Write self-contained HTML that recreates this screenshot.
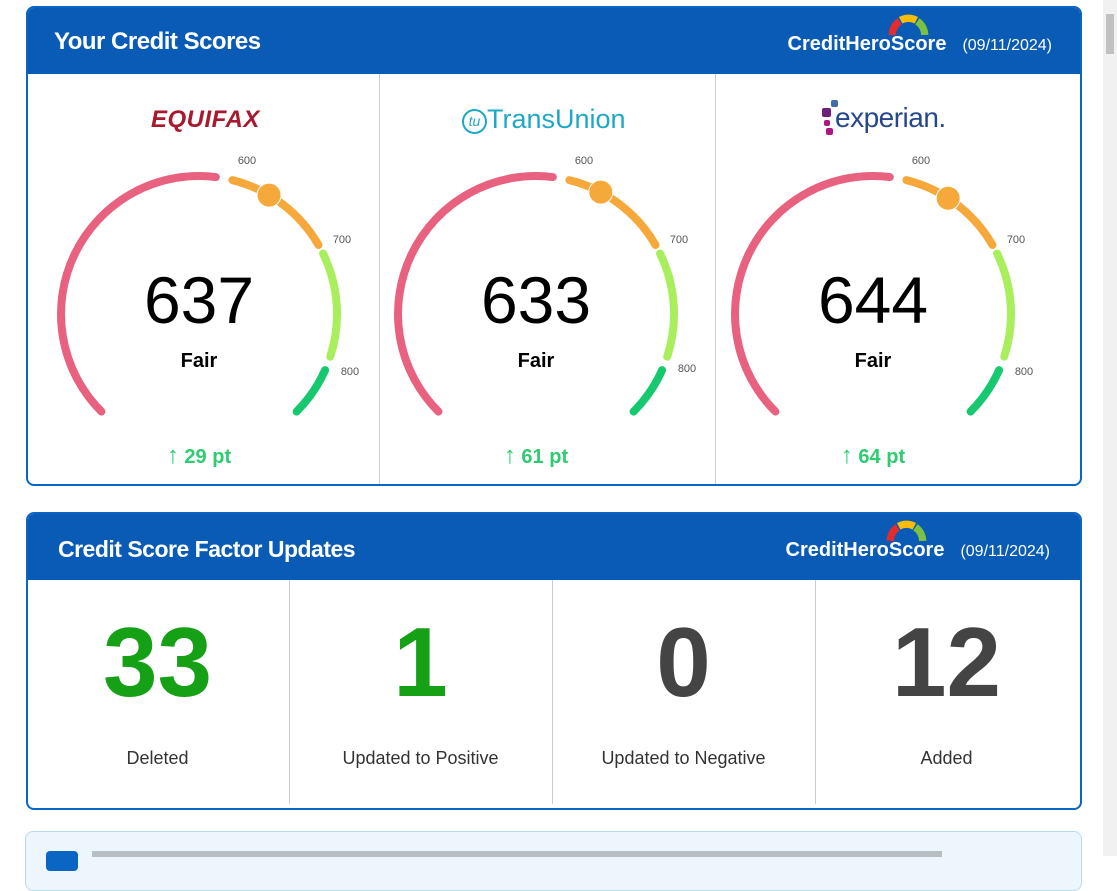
<!DOCTYPE html>
<html><head><meta charset="utf-8"><style>
*{box-sizing:border-box;margin:0;padding:0}
body{width:1117px;height:856px;overflow:hidden;background:#fff;font-family:"Liberation Sans",sans-serif;position:relative}
.card{position:absolute;left:26px;width:1056px;border:2px solid #0a66c2;border-radius:8px;overflow:hidden;background:#fff}
.hdr{height:66px;background:#0a5bb5;color:#fff;position:relative}
.hdr h2{position:absolute;left:26px;top:20px;font-size:24px;font-weight:bold;letter-spacing:-0.5px}
.brand{position:absolute;right:28px;top:25px;font-size:16px;color:#fff}
.brand b{font-size:20px;letter-spacing:0;margin-right:16px;position:relative}
.gauge{position:absolute;top:164px;width:300px;height:300px;overflow:visible}
.num{position:absolute;width:200px;text-align:center;font-size:66px;top:262px;color:#000}
.fair{position:absolute;width:200px;text-align:center;font-size:20px;font-weight:bold;top:350px}
.pt{position:absolute;width:200px;text-align:center;font-size:20px;font-weight:bold;top:446px;color:#2ecc71}
.pt span{font-weight:normal;font-size:24px;line-height:20px}
.big{position:absolute;width:263px;text-align:center;font-size:98px;font-weight:bold;top:606px}
.lbl{position:absolute;width:263px;text-align:center;font-size:18px;top:748px;color:#333}
</style></head><body>
<div class="card" style="top:6px;height:480px">
<div class="hdr"><h2>Your Credit Scores</h2>
<div class="brand"><b>CreditHeroScore<svg style="position:absolute;left:100px;top:-19px" width="42" height="23" viewBox="0 0 38 22"><path d="M3 20A16 16 0 0 1 10 7" stroke="#e52b2b" stroke-width="7" fill="none"/><path d="M11 6A16 16 0 0 1 26 6" stroke="#fbbd08" stroke-width="7" fill="none"/><path d="M27 7A16 16 0 0 1 34 20" stroke="#7cc242" stroke-width="7" fill="none"/></svg></b>(09/11/2024)</div></div>
</div>
<div style="position:absolute;left:379px;top:74px;width:1px;height:410px;background:#ccc"></div>
<div style="position:absolute;left:715px;top:74px;width:1px;height:410px;background:#ccc"></div>

<div style="position:absolute;left:151px;top:106px;font-size:24px;font-weight:bold;font-style:italic;color:#a6192e;letter-spacing:0.5px">EQUIFAX</div>
<div style="position:absolute;left:462px;top:104px;font-size:27px;color:#1ea8c8"><span style="display:inline-block;width:25px;height:25px;border:2px solid #1ea8c8;border-radius:50%;font-size:14px;text-align:center;line-height:21px;font-style:italic;vertical-align:2px">tu</span>TransUnion</div>
<div style="position:absolute;left:822px;top:100px;width:12px;height:34px"><div style="position:absolute;left:0;top:8px;width:9px;height:9px;background:#6d2077;border-radius:2px"></div><div style="position:absolute;left:9px;top:0;width:7px;height:7px;background:#426da9;border-radius:2px"></div><div style="position:absolute;left:2px;top:20px;width:6px;height:6px;background:#af1685;border-radius:2px"></div><div style="position:absolute;left:4px;top:28px;width:7px;height:7px;background:#af1685;border-radius:2px"></div></div>
<div style="position:absolute;left:835px;top:102px;font-size:28px;color:#26478d;letter-spacing:-0.5px">experian.</div>

<svg class="gauge" style="left:49px" viewBox="0 0 300 300"><g fill="none" stroke-width="8" stroke-linecap="round"><path d="M52.42 247.58A138 138 0 0 1 166.82 13.04" stroke="#e8627f"/><path d="M183.39 16.1A138 138 0 0 1 269.51 81" stroke="#f7a83a"/><path d="M274.03 89.5A138 138 0 0 1 281.25 192.64" stroke="#a9ef5d"/><path d="M276.07 206.13A138 138 0 0 1 247.58 247.58" stroke="#16c86e"/></g><circle cx="220.04" cy="31.1" r="12" fill="#f6a93b" stroke="#fff" stroke-width="1"/><g font-size="11" fill="#555" text-anchor="middle"><text x="198" y="0">600</text><text x="293" y="79">700</text><text x="301" y="211">800</text></g></svg>
<svg class="gauge" style="left:386px" viewBox="0 0 300 300"><g fill="none" stroke-width="8" stroke-linecap="round"><path d="M52.42 247.58A138 138 0 0 1 166.82 13.04" stroke="#e8627f"/><path d="M183.39 16.1A138 138 0 0 1 269.51 81" stroke="#f7a83a"/><path d="M274.03 89.5A138 138 0 0 1 281.25 192.64" stroke="#a9ef5d"/><path d="M276.07 206.13A138 138 0 0 1 247.58 247.58" stroke="#16c86e"/></g><circle cx="214.79" cy="28.16" r="12" fill="#f6a93b" stroke="#fff" stroke-width="1"/><g font-size="11" fill="#555" text-anchor="middle"><text x="198" y="0">600</text><text x="293" y="79">700</text><text x="301" y="208">800</text></g></svg>
<svg class="gauge" style="left:723px" viewBox="0 0 300 300"><g fill="none" stroke-width="8" stroke-linecap="round"><path d="M52.42 247.58A138 138 0 0 1 166.82 13.04" stroke="#e8627f"/><path d="M183.39 16.1A138 138 0 0 1 269.51 81" stroke="#f7a83a"/><path d="M274.03 89.5A138 138 0 0 1 281.25 192.64" stroke="#a9ef5d"/><path d="M276.07 206.13A138 138 0 0 1 247.58 247.58" stroke="#16c86e"/></g><circle cx="225.15" cy="34.26" r="12" fill="#f6a93b" stroke="#fff" stroke-width="1"/><g font-size="11" fill="#555" text-anchor="middle"><text x="198" y="0">600</text><text x="293" y="79">700</text><text x="301" y="211">800</text></g></svg>

<div class="num" style="left:99px">637</div><div class="fair" style="left:99px">Fair</div><div class="pt" style="left:99px"><span>↑</span> 29 pt</div>
<div class="num" style="left:436px">633</div><div class="fair" style="left:436px">Fair</div><div class="pt" style="left:436px"><span>↑</span> 61 pt</div>
<div class="num" style="left:773px">644</div><div class="fair" style="left:773px">Fair</div><div class="pt" style="left:773px"><span>↑</span> 64 pt</div>

<div class="card" style="top:512px;height:298px">
<div class="hdr"><h2 style="left:30px;top:22px;font-size:23px">Credit Score Factor Updates</h2>
<div class="brand" style="right:30px;top:25px"><b>CreditHeroScore<svg style="position:absolute;left:100px;top:-19px" width="42" height="23" viewBox="0 0 38 22"><path d="M3 20A16 16 0 0 1 10 7" stroke="#e52b2b" stroke-width="7" fill="none"/><path d="M11 6A16 16 0 0 1 26 6" stroke="#fbbd08" stroke-width="7" fill="none"/><path d="M27 7A16 16 0 0 1 34 20" stroke="#7cc242" stroke-width="7" fill="none"/></svg></b>(09/11/2024)</div></div>
</div>
<div style="position:absolute;left:289px;top:580px;width:1px;height:224px;background:#ccc"></div>
<div style="position:absolute;left:552px;top:580px;width:1px;height:224px;background:#ccc"></div>
<div style="position:absolute;left:815px;top:580px;width:1px;height:224px;background:#ccc"></div>
<div class="big" style="left:26px;color:#16a016">33</div><div class="lbl" style="left:26px">Deleted</div>
<div class="big" style="left:289px;color:#16a016">1</div><div class="lbl" style="left:289px">Updated to Positive</div>
<div class="big" style="left:552px;color:#444">0</div><div class="lbl" style="left:552px">Updated to Negative</div>
<div class="big" style="left:815px;color:#444">12</div><div class="lbl" style="left:815px">Added</div>

<div style="position:absolute;left:25px;top:831px;width:1057px;height:60px;background:#eef6fd;border:1px solid #b8dcef;border-radius:8px"></div>
<div style="position:absolute;left:46px;top:851px;width:32px;height:20px;background:#0a66c2;border-radius:4px"></div>
<div style="position:absolute;left:92px;top:851px;width:850px;height:6px;background:#555;opacity:0.35"></div>
<div style="position:absolute;left:1103px;top:0;width:14px;height:856px;background:#f1f1f1"></div>
<div style="position:absolute;left:1106px;top:14px;width:8px;height:40px;background:#c1c1c1"></div>
</body></html>
